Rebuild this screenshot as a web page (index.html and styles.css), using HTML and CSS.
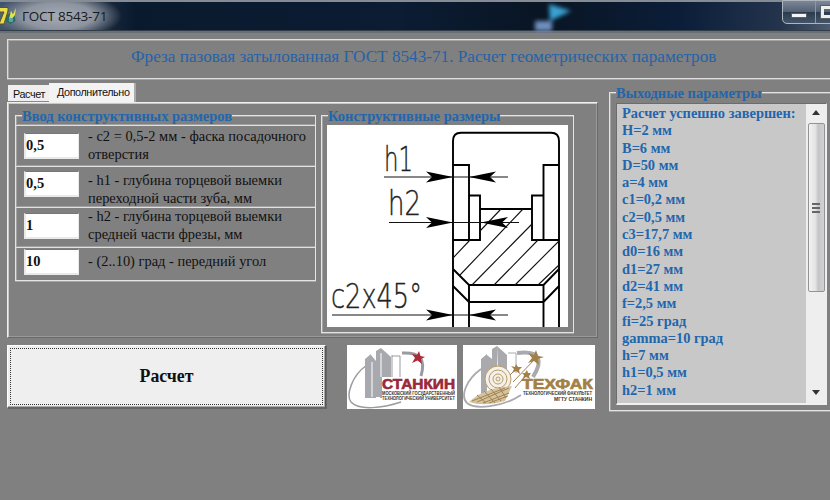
FILE: index.html
```html
<!DOCTYPE html>
<html lang="ru">
<head>
<meta charset="utf-8">
<title>ГОСТ 8543-71</title>
<link rel="stylesheet" href="styles.css">
</head>
<body>
<header class="titlebar">
  <svg class="app-icon" width="17" height="20" viewBox="0 0 17 20">
    <path d="M6 9l8-3 1.500 9-5 3-5-3z" fill="#286c63"/><path d="M9 13l2-8 2 3 3-6-1 7-4 5z" fill="#e6df4e"/>
    <path d="M-1 1.500H8V5L4 18H-1L4 6H-1z" fill="#e9dc4a" stroke="#5d5520"/>
    <circle cx="11" cy="14" r="2.300" fill="#5aa4a8"/>
  </svg>
  <span class="caption">ГОСТ 8543-71</span>
  <svg class="backdrop" width="50" height="28" viewBox="0 0 50 28">
    <path d="M14 1l22 7-21 10z" fill="#3aa2d4"/><path d="M0 18h17v11H0z" fill="#6f8fbd"/>
  </svg>
  <div class="window-buttons"><i class="minimize"></i><i class="maximize"></i></div>
</header>
<div class="banner"><span>Фреза пазовая затылованная ГОСТ 8543-71. Расчет геометрических параметров</span></div>
<main class="columns">
  <section class="left">
    <nav class="tabs"><span class="tab">Расчет</span><span class="tab active">Дополнительно</span></nav>
    <div class="page">
      <div class="group inputs">
        <h2 class="legend">Ввод конструктивных размеров</h2>
        <div class="row r1"><div class="edit">0,5</div><p>- c2 = 0,5-2 мм - фаска посадочного<br>отверстия</p></div>
        <div class="row r2"><div class="edit">0,5</div><p>- h1 - глубина торцевой выемки<br>переходной части зуба, мм</p></div>
        <div class="row r3"><div class="edit">1</div><p>- h2 - глубина торцевой выемки<br>средней части фрезы, мм</p></div>
        <div class="row r4"><div class="edit">10</div><p>- (2..10) град - передний угол</p></div>
      </div>
      <div class="group scheme">
        <h2 class="legend">Конструктивные размеры</h2>
        <svg class="drawing" width="241" height="202" viewBox="327 125 241 202">
          <g fill="none" stroke="#000" stroke-width="1.900">
            <path d="M453 328V141Q453 132.700 461 132.700H551Q559 132.700 559 141V328"/>
            <path d="M453 165H469V240M469 195.500H480V240H453M559 165H543.500V240M543.500 195.500H532V240H559M480 209H532"/>
            <path d="M453 269L469 285H543.500L559 269M453 286L469 302H543.500L559 286M469 285V328M543.500 285V328"/>
          </g>
          <g fill="none" stroke="#111" stroke-width="1.100">
            <path d="M453 258L470 240M480 231L501 209M460 275L523 209M472 285L532 224M494 285L538 240M515 285L559 241M538 285L559 265"/>
            <path d="M384 177H508M389 222.500H519M332 315H508"/>
          </g>
          <g>
            <path d="M453 177L426 171.500L432 177L426 182.500Z"/>
            <path d="M469 177L496 171.500L490 177L496 182.500Z"/>
            <path d="M453 222.500L426 217L432 222.500L426 228Z"/>
            <path d="M481 222.500L508 217L502 222.500L508 228Z"/>
            <path d="M453 315L426 309.500L432 315L426 320.500Z"/>
            <path d="M469 315L496 309.500L490 315L496 320.500Z"/>
          </g>
          <g class="dims">
            <text x="384" y="171" textLength="29" lengthAdjust="spacingAndGlyphs">h1</text>
            <text x="388" y="215" textLength="33" lengthAdjust="spacingAndGlyphs">h2</text>
            <text x="331" y="308" textLength="91" lengthAdjust="spacingAndGlyphs">c2x45°</text>
          </g>
        </svg>
      </div>
    </div>
    <div class="actions">
      <button class="calc"><span>Расчет</span></button>
      <svg class="logo" width="110" height="64" viewBox="0 0 110 64">
        <rect width="110" height="64" fill="#fff"/>
        <g fill="none" stroke="#999ba0">
          <path d="M20 20C4 31-1 51 4 57C12 66 36 63 54 57" stroke-width="1.500"/>
          <path d="M55 8C73 7 79 14 74 31" stroke-width="3"/>
          <path d="M45 10V32M45 11H53V32" stroke-width="1"/>
        </g>
        <path d="M18 14L24 9V53H18ZM24 10L29 16V53H24ZM29 6L34 3V52H29ZM34 3L44 12V32H35V53H33Z" fill="#a7a9ae"/>
        <path d="M25 17V52M34 8V32" stroke="#fff"/>
        <path d="M72 6L73.500 11L78 12L74 14L75 19L70.500 15.500L65 18L68 13L65 9L70 10Z" fill="#ae2938"/>
        <text class="stankin" x="35" y="43.500" textLength="73" lengthAdjust="spacingAndGlyphs">СТАНКИН</text>
        <text class="tiny" x="35" y="49.500" textLength="73" lengthAdjust="spacingAndGlyphs">МОСКОВСКИЙ ГОСУДАРСТВЕННЫЙ</text>
        <text class="tiny" x="35" y="54.500" textLength="73" lengthAdjust="spacingAndGlyphs">ТЕХНОЛОГИЧЕСКИЙ УНИВЕРСИТЕТ</text>
      </svg>
      <svg class="logo second" width="132" height="64" viewBox="0 0 132 64">
        <rect width="132" height="64" fill="#fff"/>
        <g fill="none" stroke="#aaa9ae" stroke-width="1.800">
          <path d="M18 24C3 35-3 51 4 58C12 65 40 62 58 50"/><path d="M54 8C78 5 80 16 70 32" stroke-width="4"/>
        </g>
        <path d="M18 14L24 9V53H18ZM24 10L29 14V30H24ZM29 4L34 1V25H29ZM34 1L44 10V27H35Z" fill="#aaa9ae"/>
        <path d="M45 8H53V28" fill="none" stroke="#aaa9ae"/>
        <circle cx="35" cy="34" r="13" fill="#f5f1e8" stroke="#b79c68"/>
        <g fill="none" stroke="#b79c68"><circle cx="35" cy="34" r="9"/><circle cx="35" cy="34" r="5"/><circle cx="35" cy="34" r="2"/></g>
        <path d="M6 57Q20 43 49 41L42 56Q20 62 6 57Z" fill="#d6c39d"/>
        <path d="M9 56L42 43M14 57L46 43M20 58L46 48M26 58L45 51M14 50L23 58M21 46L32 58M28 44L38 56M36 42L43 53M47 30L54 23M50 37L72 14M52 43L64 29" fill="none" stroke="#9f8352"/>
        <path d="M73 5L75 11L81 12L75 14L76 20L71 16L65 18L69 13L65 8L71 10ZM53 19L55 22L59 22L56 25L57 29L53 26L49 28L51 24L48 21L52 22ZM64 25L65 28L68 28L66 31L67 34L63 32L60 34L61 30L59 28L62 28Z" fill="#a28046"/>
        <text class="techfak" x="59" y="43.500" textLength="71" lengthAdjust="spacingAndGlyphs">ТЕХФАК</text>
        <text class="tiny" x="60" y="50" textLength="69" lengthAdjust="spacingAndGlyphs">ТЕХНОЛОГИЧЕСКИЙ ФАКУЛЬТЕТ</text>
        <text class="tiny" x="91" y="56" textLength="38" lengthAdjust="spacingAndGlyphs">МГТУ СТАНКИН</text>
      </svg>
    </div>
  </section>
  <section class="group output">
    <h2 class="legend">Выходные параметры</h2>
    <div class="memo">
      <ul>
        <li>Расчет успешно завершен:</li><li>H=2 мм</li><li>B=6 мм</li><li>D=50 мм</li><li>a=4 мм</li><li>c1=0,2 мм</li><li>c2=0,5 мм</li><li>c3=17,7 мм</li><li>d0=16 мм</li><li>d1=27 мм</li><li>d2=41 мм</li><li>f=2,5 мм</li><li>fi=25 град</li><li>gamma=10 град</li><li>h=7 мм</li><li>h1=0,5 мм</li><li>h2=1 мм</li>
      </ul>
      <div class="scrollbar"><i class="up"></i><div class="thumb"><i></i><i></i><i></i></div><i class="down"></i></div>
    </div>
  </section>
</main>
</body>
</html>
```

FILE: styles.css
```css
* { box-sizing: border-box; }
html, body { height: 100%; }
body {
  margin: 0;
  overflow: hidden;
  background: #808080;
  font-family: "Liberation Serif", serif;
  color: #111;
}
.titlebar {
  display: flex;
  position: relative;
  height: 33px;
  border-top: 2px solid #858c96;
  border-bottom: 2px solid #686d76;
  background:
    radial-gradient(ellipse 64px 24px at 58px 14px, #a5abb4 0, #8d949f 55%, transparent 100%),
    linear-gradient(90deg, #41536a 0, #2b3a50 70px, #0a1a2e 135px, #0b1c33 400px, #091524 540px, #0b1d38 680px, #24344d 780px, #4d5b70 830px);
  box-shadow: inset 0 -1px #323b48;
}
.app-icon { margin-top: 4px; }
.caption { margin: 5px 0 0 5px; font: 13.500px/18px "Open Sans", sans-serif; letter-spacing: -.2px; color: #151a22; }
.backdrop { position: absolute; left: 535px; top: 1px; filter: blur(2px); }
.window-buttons {
  position: absolute; left: 782px; top: -2px;
  display: flex; width: 60px; height: 24px;
  border: 1px solid #aeb5bf; border-radius: 0 0 0 5px;
  background: linear-gradient(#7c8797, #526073 50%, #2b3a4e 51%, #46566a);
}
.minimize { width: 33px; border-right: 1px solid #8d97a4; display: flex; align-items: flex-end; justify-content: center; padding-bottom: 5px; }
.minimize::before { content: ""; width: 14px; height: 3px; background: #f4f4f4; border: 1px solid #555e6a; box-sizing: content-box; }
.maximize { margin: 5px 0 0 5px; width: 18px; height: 12px; border: 3px solid #eee; outline: 1px solid #555e6a; }
.banner {
  margin: 6px -10px 0 7px;
  height: 40px;
  border: 1px solid #dedede;
  box-shadow: inset 1px 1px #a4a4a4, 0 1px #a4a4a4;
  padding: 7px 0 0 123px;
  font-size: 17.200px; line-height: 20px;
  color: #2563a8;
  white-space: nowrap;
}
.columns { display: flex; gap: 11px; padding: 4px 0 0 7px; }
.left { flex: 0 0 591px; }
.tabs { display: flex; align-items: flex-end; height: 19px; padding-left: 1px; font: 10.800px/14px "Liberation Sans", sans-serif; letter-spacing: -.4px; }
.tab { height: 17px; width: 41px; padding: 2px 0 0 5px; background: #efefef; white-space: nowrap; border-bottom: 1px solid #888; }
.tab.active { height: 19px; width: 87px; padding: 2px 0 0 8px; background: #f3f3f3; border: 0; border-right: 2px solid #aaa; }
.page {
  height: 236px;
  display: flex; align-items: flex-start; gap: 5px;
  border: 1px solid;
  border-color: #f0f0f0 #6a6a6a #6a6a6a #f0f0f0;
  box-shadow: inset 1px 1px #c8c8c8, inset -1px -1px #999;
  padding: 12px 0 0 7px;
}
.group { border: 1px solid #e4e4e4; box-shadow: inset 1px 1px #a4a4a4, 0 1px #a4a4a4; }
.legend { margin: -9px 0 0 6px; height: 18px; width: max-content; font-size: 14.500px; line-height: 18px; font-weight: bold; color: #2266ad; white-space: nowrap; background: #808080; }
.inputs { width: 301px; height: 166px; }
.row { display: flex; border-top: 1px solid #e0e0e0; box-shadow: 0 -1px #a0a0a0; padding-left: 8px; }
.row p { margin: 0 0 0 9px; font-size: 14.450px; line-height: 17.500px; white-space: nowrap; }
.edit { width: 55px; height: 26px; border: solid #e9e9e9; border-width: 1px 1px 2px 2px; border-top-color: #777; background: #fff; padding: 3px 0 0 0; font-size: 14.500px; line-height: 17px; font-weight: bold; }
.r1 { height: 41px; padding-top: 7px; } .r2 { height: 41px; padding-top: 4px; } .r3 { height: 40px; padding-top: 5px; } .r4 { height: 33px; padding-top: 1px; }
.r1 p { margin-top: -5px; } .r2 p { margin-top: 1px; } .r3 p { margin-top: -5px; } .r4 p { margin-top: 4px; }
.scheme { width: 253px; height: 218px; }
.drawing { display: block; margin: 0 0 0 5px; background: #fff; }
.dims { font: 33px "DejaVu Sans Light", "DejaVu Sans", sans-serif; font-weight: 200; fill: #222; stroke: #222; stroke-width: .4; }
.actions { display: flex; margin-top: 7px; }
.calc {
  width: 319px; height: 63px; padding: 2px; border: solid 1px; border-color: #fff #555 #666 #fff; background: #efefef;
  box-shadow: inset -1px -1px #aaa, 1px 1px #666;
  font: bold 17.800px/20px "Liberation Serif", serif; color: #111;
}
.calc span { display: flex; height: 100%; align-items: center; justify-content: center; border: 1px dotted #333; padding-bottom: 2px; }
.logo { margin-left: 21px; overflow: visible; }
.logo.second { margin-left: 6px; }
.stankin { font: bold 14px "Liberation Sans", sans-serif; fill: #98283a; stroke: #98283a; stroke-width: .6; }
.techfak { font: bold 14px "Liberation Sans", sans-serif; fill: #a28046; stroke: #a28046; stroke-width: .6; }
.tiny { font: bold 4.500px "Liberation Sans", sans-serif; fill: #333; }
.output { flex: none; width: 226px; height: 319px; margin-top: 9px; }
.memo {
  display: flex; justify-content: space-between;
  margin: 1px 0 0 6px; width: 211px; height: 302px; background: #c8c8c8;
  border: solid; border-width: 1px 1px 2px 1px; border-color: #6c6c6c #f0f0f0 #f0f0f0 #6c6c6c;
}
.memo ul { list-style: none; margin: 0; padding: 1px 0 0 5px; font-size: 14.450px; line-height: 17.300px; font-weight: bold; color: #2266ad; white-space: nowrap; }
.scrollbar { display: flex; flex-direction: column; align-items: center; width: 20px; background: #eee; }
.up, .down { border: 4px solid transparent; }
.up { border-top: 0; border-bottom: 5px solid #333; margin-top: 6px; }
.down { border-bottom: 0; border-top: 5px solid #333; margin: auto 0 8px; }
.thumb { display: flex; flex-direction: column; align-items: center; justify-content: center; gap: 2px; width: 17px; height: 169px; margin-top: 8px; border: 1px solid #939393; border-radius: 2px; background: linear-gradient(90deg, #f3f3f3, #e2e2e2 45%, #c5c5c8 60%, #d2d2d4); }
.thumb i { width: 8px; height: 2px; background: #666; }
```
